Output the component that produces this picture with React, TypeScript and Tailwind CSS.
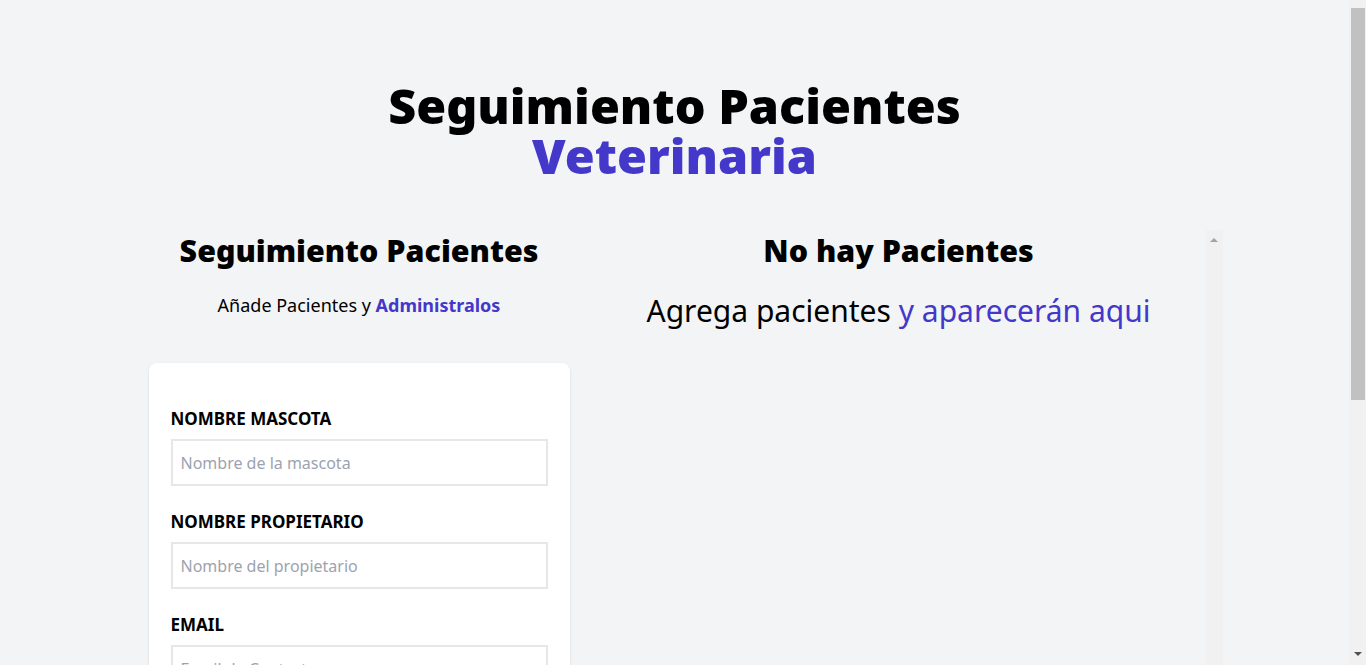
import React from 'react';

const font = { fontFamily: '"Noto Sans", "Open Sans", sans-serif' };

function Field({
  label,
  placeholder,
  type = 'text',
}: {
  label: string;
  placeholder?: string;
  type?: string;
}) {
  return (
    <div className="mb-6">
      <label className="block h-6 text-[17px] font-bold uppercase leading-6 text-black">
        {label}
      </label>
      <input
        type={type}
        placeholder={placeholder}
        className="mt-2 block h-[47px] w-full border-2 border-[#e5e7eb] bg-white p-2 text-base text-gray-700 placeholder:text-[#9ca3af] focus:outline-none"
      />
    </div>
  );
}

export default function App() {
  return (
    <div className="flex h-screen bg-[#f3f4f6]" style={font}>
      <div className="flex-1 overflow-y-auto [scrollbar-width:none]">
        {/* Header */}
        <h1 className="mx-auto pt-20 text-center text-[48.5px] font-black leading-[50px] text-black">
          Seguimiento Pacientes <br />
          <span className="text-[#4338ca]">Veterinaria</span>
        </h1>

        <div className="mx-auto mt-[50px] flex max-w-[1096px]">
          {/* Formulario */}
          <div className="w-[465px] shrink-0">
            <h2 className="mt-[3px] text-center text-[30.4px] font-black leading-9 text-black">
              Seguimiento Pacientes
            </h2>
            <p className="mt-[22px] text-center text-lg leading-7 text-black">
              Añade Pacientes y{' '}
              <span className="font-bold text-[#4338ca]">Administralos</span>
            </p>

            <form className="mx-[22px] mt-[44px] mb-10 rounded-lg bg-white px-[22px] pt-11 pb-8 shadow-sm">
              <Field label="Nombre Mascota" placeholder="Nombre de la mascota" />
              <Field label="Nombre Propietario" placeholder="Nombre del propietario" />
              <Field label="Email" type="email" placeholder="Email de Contacto" />
              <Field label="Alta" type="date" />
              <div className="mb-6">
                <label className="block h-6 text-[17px] font-bold uppercase leading-6 text-black">
                  Síntomas
                </label>
                <textarea
                  placeholder="Describe los síntomas"
                  className="mt-2 block h-24 w-full border-2 border-[#e5e7eb] p-2 text-base placeholder:text-[#9ca3af] focus:outline-none"
                />
              </div>
              <button
                type="button"
                className="w-full bg-[#4f46e5] p-3 font-bold uppercase text-white hover:bg-[#4338ca]"
              >
                Agregar Paciente
              </button>
            </form>
          </div>

          {/* Listado */}
          <div className="flex h-screen flex-1">
            <div className="flex-1 overflow-y-auto">
              <h2 className="mt-[3px] text-center text-[30.4px] font-black leading-9 text-black">
                No hay Pacientes
              </h2>
              <p className="mt-6 text-center text-3xl leading-9 text-black">
                Agrega pacientes{' '}
                <span className="text-[#4338ca]">y aparecerán aqui</span>
              </p>
            </div>
            {/* listado scrollbar track */}
            <div className="flex w-[17px] flex-col items-center bg-[#f1f1f1] pt-2">
              <div className="h-0 w-0 border-x-4 border-b-4 border-x-transparent border-b-[#a3a3a3]" />
            </div>
          </div>
        </div>
      </div>

      {/* page scrollbar */}
      <div className="flex w-[17px] flex-col bg-[#f1f1f1]">
        <div className="mt-2 ml-[2px] h-[392px] w-[14px] bg-[#c1c1c1]" />
        <div className="flex-1" />
        <div className="mb-[9px] h-0 w-0 self-center border-x-4 border-t-4 border-x-transparent border-t-[#505050]" />
      </div>
    </div>
  );
}
